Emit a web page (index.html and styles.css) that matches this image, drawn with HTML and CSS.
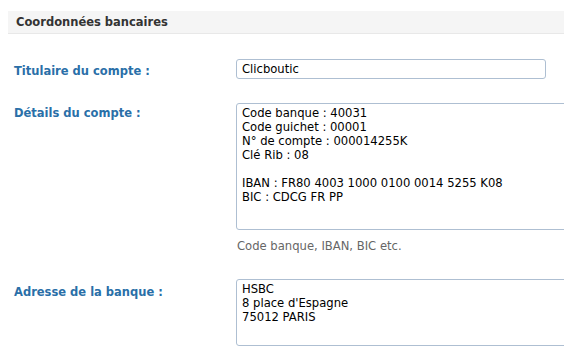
FILE: index.html
```html
<!DOCTYPE html>
<html lang="fr">
<head>
    <meta charset="UTF-8">
    <title>Coordonnées bancaires</title>
    <link rel="stylesheet" href="styles.css">
</head>
<body>
    <div class="panel">
        <h2 class="panel-title">Coordonnées bancaires</h2>
        <form class="bank-form">
            <div class="row">
                <label for="titulaire">Titulaire du compte :</label>
                <div class="field">
                    <input type="text" id="titulaire" value="Clicboutic">
                </div>
            </div>

            <div class="row">
                <label for="details">Détails du compte :</label>
                <div class="field">
                    <textarea id="details" class="tall">Code banque : 40031
Code guichet : 00001
N° de compte : 000014255K
Clé Rib : 08

IBAN : FR80 4003 1000 0100 0014 5255 K08
BIC : CDCG FR PP</textarea>
                    <p class="hint">Code banque, IBAN, BIC etc.</p>
                </div>
            </div>

            <div class="row">
                <label for="adresse">Adresse de la banque :</label>
                <div class="field">
                    <textarea id="adresse" class="short">HSBC
8 place d'Espagne
75012 PARIS</textarea>
                </div>
            </div>
        </form>
    </div>
</body>
</html>
```

FILE: styles.css
```css
body {
    font-family: 'DejaVu Sans', sans-serif;
    font-size: 12px;
    background-color: #fff;
    margin: 0;
    padding: 11px 0 0 8px;
    overflow: hidden;
}

.panel {
    width: 556px;
    overflow: hidden;
}

.panel-title {
    margin: 0;
    padding: 4px 8px;
    height: 14px;
    font-size: 11.5px;
    font-weight: bold;
    color: #333;
    background-color: #f5f5f5;
    border-bottom: 1px solid #e8e8e8;
    line-height: 14px;
}

.bank-form {
    padding: 25px 0 0 6px;
}

.row {
    display: grid;
    grid-template-columns: 222px 1fr;
    margin-bottom: 24px;
}

.row:nth-child(2) {
    margin-bottom: 26px;
}

label {
    color: #2a6fa8;
    font-size: 11.5px;
    font-weight: bold;
    padding-top: 5px;
}

.row:nth-child(2) label {
    padding-top: 3px;
}

.row:nth-child(3) label {
    padding-top: 6px;
}

input[type="text"],
textarea {
    font-family: 'DejaVu Sans', sans-serif;
    font-size: 11.6px;
    line-height: 14px;
    color: #000;
    border: 1px solid #aebfd2;
    border-radius: 3px;
    padding: 2px 5px;
    margin: 0;
    box-sizing: border-box;
    display: block;
    resize: none;
}

input[type="text"] {
    width: 310px;
    height: 20px;
}

textarea {
    width: 360px;
    overflow: hidden;
}

textarea.tall {
    height: 127px;
}

textarea.short {
    height: 67px;
}

.hint {
    margin: 9px 0 0 1px;
    font-size: 11.6px;
    color: #666;
}
```
